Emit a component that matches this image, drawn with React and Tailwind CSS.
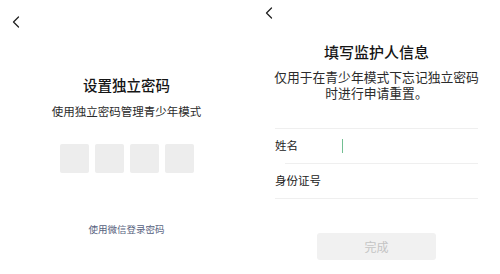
import React from 'react';

const font = { fontFamily: '"Noto Sans CJK SC", "Noto Sans", sans-serif' };

const Back = ({ className }) => (
  <svg className={className} width="8" height="12" viewBox="0 0 8 12" fill="none">
    <path d="M6.5 1 L1.5 6 L6.5 11" stroke="#222" strokeWidth="1.3" strokeLinecap="round" strokeLinejoin="round" />
  </svg>
);

const App = () => {
  return (
    <div className="flex w-[500px] h-[274px] bg-white overflow-hidden" style={font}>
      {/* Left: set password */}
      <div className="w-[253px] flex flex-col">
        <div className="pt-[16px] pl-[12px]">
          <Back />
        </div>
        <h2 className="mt-[47px] text-center text-[14.5px] leading-[20px] font-medium text-[#151515]">设置独立密码</h2>
        <p className="mt-[8px] text-center text-[11.5px] leading-[16px] text-[#2b2b2b]">使用独立密码管理青少年模式</p>
        <div className="mt-[25px] flex justify-center gap-[6px]">
          {[0, 1, 2, 3].map(i => (
            <div key={i} className="w-[29px] h-[29px] rounded-[2px] bg-[#ededed]" />
          ))}
        </div>
        <p className="mt-[49px] text-center text-[9.5px] leading-[14px] text-[#56617d]">使用微信登录密码</p>
      </div>

      {/* Right: guardian info */}
      <div className="w-[247px] flex flex-col">
        <div className="pt-[7px] pl-[12px]">
          <Back />
        </div>
        <h2 className="mt-[23px] text-center text-[15px] leading-[20px] font-medium text-[#151515]">填写监护人信息</h2>
        <p className="mt-[7px] text-center text-[12.8px] leading-[16px] text-[#2b2b2b]">
          仅用于在青少年模式下忘记独立密码<br />时进行申请重置。
        </p>
        <div className="mt-[27px] mx-[22px]">
          <div className="h-px bg-[#efefef]" />
          <div className="h-[34px] flex items-center text-[11.5px] text-[#222]">
            <span className="w-[67px]">姓名</span>
            <span className="w-px h-[14px] bg-[#72bf92]" />
          </div>
          <div className="ml-[10px] h-px bg-[#efefef]" />
          <div className="h-[34px] flex items-center text-[11.5px] text-[#222]">身份证号</div>
          <div className="h-px bg-[#efefef]" />
        </div>
        <div className="mt-[34px] flex justify-center">
          <button className="w-[119px] h-[27px] rounded-[3px] bg-[#f1f1f1] text-[12px] text-[#c4c4c4]">完成</button>
        </div>
      </div>
    </div>
  );
};

export default App;
